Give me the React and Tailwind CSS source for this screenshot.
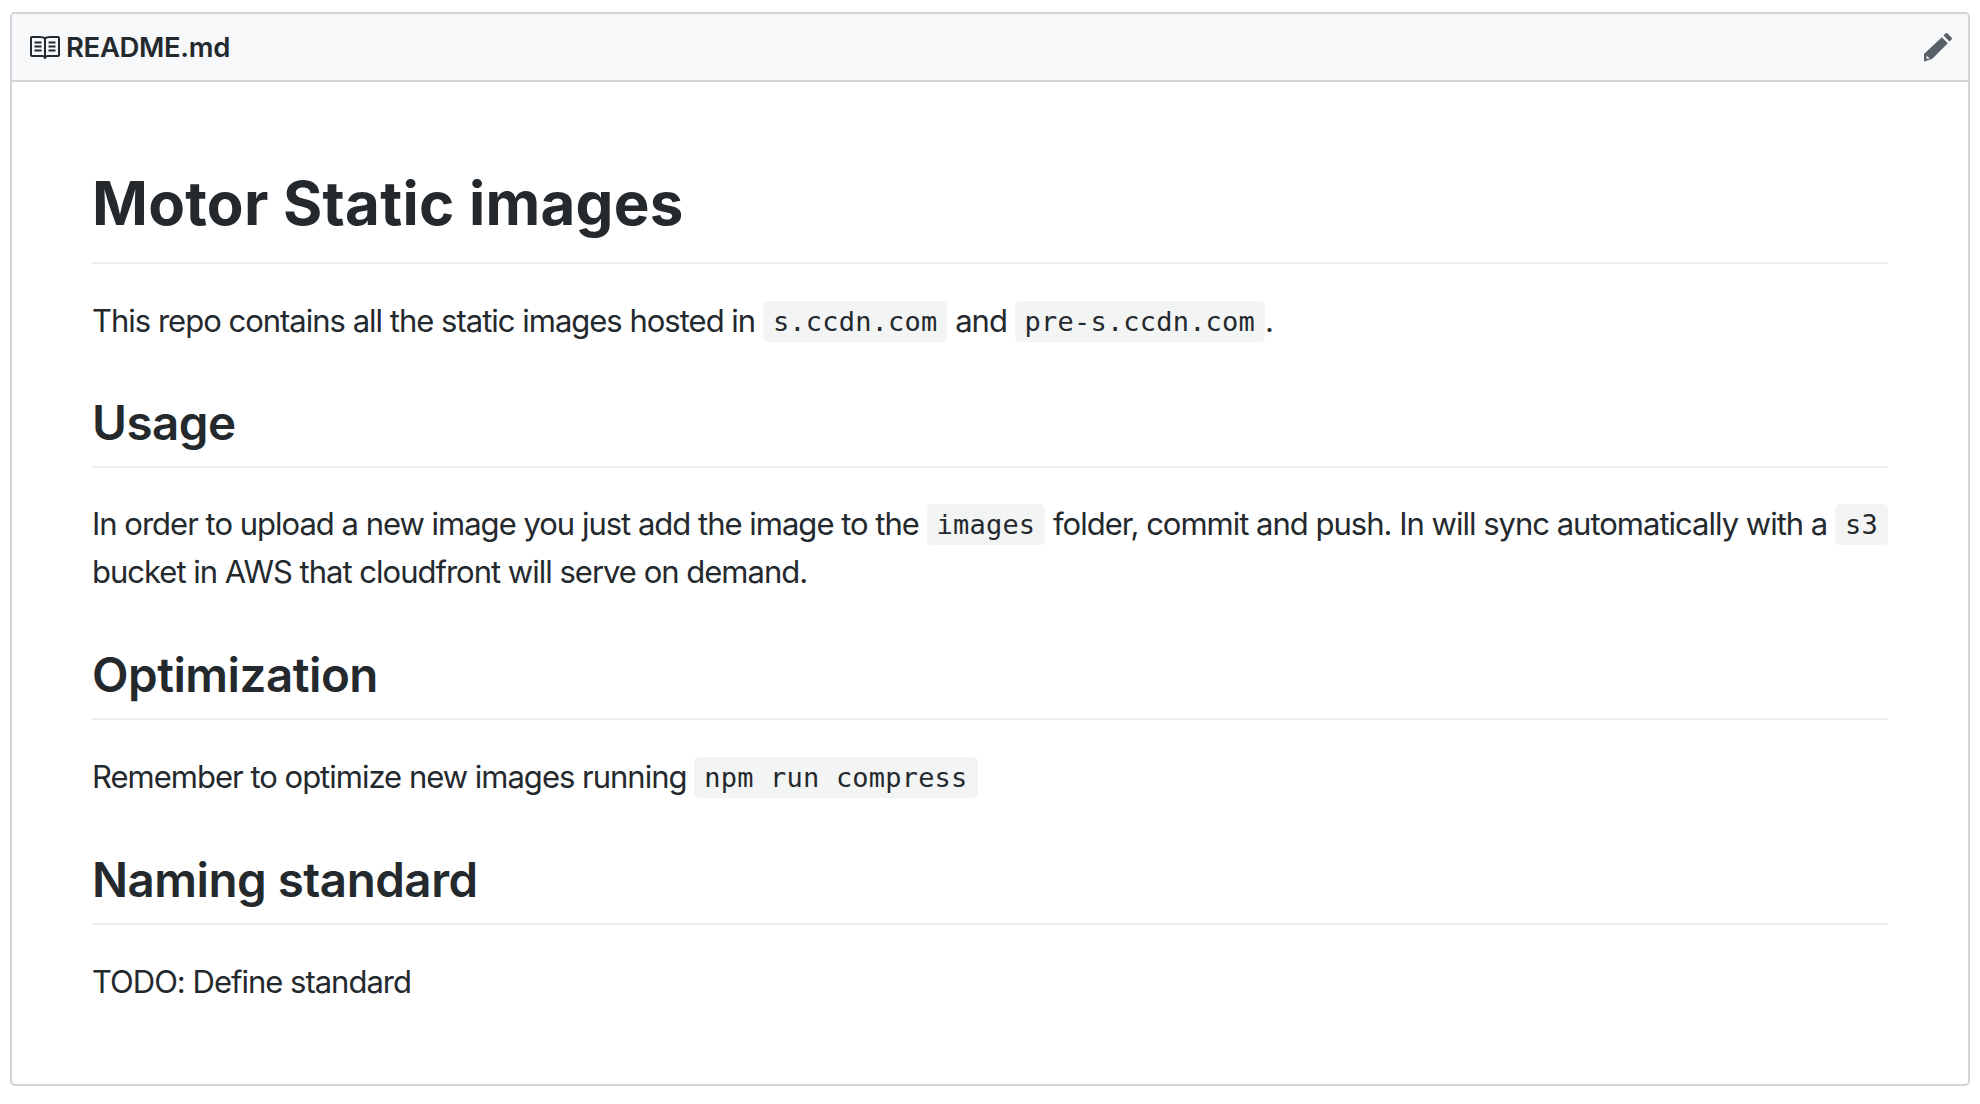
import React from 'react';

const Code = ({ children }) => (
  <code className="rounded-[5px] bg-[#f3f4f4] px-[10px] py-[5px] align-[1px] font-['DejaVu_Sans_Mono',monospace] text-[27px] leading-none tracking-[0.2px] text-[#24292e]">
    {children}
  </code>
);

const Heading = ({ children, className }) => (
  <h2 className={`border-b-2 border-[#eaecef] text-[47.5px] font-semibold leading-[58px] tracking-[-0.5px] text-[#24292e] ${className}`}>
    {children}
  </h2>
);

const BookIcon = () => (
  <svg width="30" height="24" viewBox="0 0 30 24" fill="none" stroke="#24292e" strokeWidth="2">
    <path d="M15 3.5C13.5 2 12 2 10 2H2a1 1 0 0 0-1 1v17a1 1 0 0 0 1 1h10c1.500 0 2.500 .5 3 2 .5-1.500 1.500-2 3-2h10a1 1 0 0 0 1-1V3a1 1 0 0 0-1-1h-8c-2 0-3.500 0-5 1.500z" />
    <path d="M15 4v18M4.500 7.500h7M4.500 11.500h7M4.500 15.500h7M18.500 7.500h7M18.500 11.500h7M18.500 15.500h7" />
  </svg>
);

const PencilIcon = () => (
  <svg width="30" height="30" viewBox="0 0 30 30" fill="#586069">
    <path d="M24.500 1.500l4 4a1.500 1.500 0 0 1 0 2l-2 2-6-6 2-2a1.500 1.500 0 0 1 2 0z" />
    <path d="M18.800 5.200l6 6L9 27l-8 2.500V22z M3.500 23.500v3.300h3.300z" fillRule="evenodd" />
  </svg>
);

const App = () => {
  return (
    <div className="min-h-[1104px] bg-white px-[10px] pt-[12px] font-['Inter',sans-serif] text-[#24292e]">
      <div className="h-[1074px] rounded-[5px] border-2 border-[#d1d5da]">
        <div className="flex h-[68px] items-center justify-between rounded-t-[4px] border-b-2 border-[#d1d5da] bg-[#f6f8fa] pl-[18px] pr-[15px]">
          <div className="flex items-center gap-[6px]">
            <BookIcon />
            <span className="pt-[2px] text-[27.5px] font-semibold tracking-[-0.35px]">README.md</span>
          </div>
          <PencilIcon />
        </div>

        <div className="px-[80px] text-[31px] leading-[48px] tracking-[-1px]">
          <h1 className="mt-[82px] border-b-2 border-[#eaecef] pb-[20px] text-[60px] font-bold leading-[78px] tracking-[0.25px]">
            Motor Static images
          </h1>
          <p className="mt-[33px]">
            This repo contains all the static images hosted in <Code>s.ccdn.com</Code> and <Code>pre-s.ccdn.com</Code>.
          </p>
          <Heading className="mt-[49px] pb-[14px]">Usage</Heading>
          <p className="mt-[32px]">
            In order to upload a new image you just add the image to the <Code>images</Code> folder, commit and push. In will sync automatically with a <Code>s3</Code> bucket in AWS that cloudfront will serve on demand.
          </p>
          <Heading className="mt-[50px] pb-[14px]">Optimization</Heading>
          <p className="mt-[33px]">
            Remember to optimize new images running <Code>npm run compress</Code>
          </p>
          <Heading className="mt-[50px] pb-[14px]">Naming standard</Heading>
          <p className="mt-[33px]">TODO: Define standard</p>
        </div>
      </div>
    </div>
  );
};

export default App;
